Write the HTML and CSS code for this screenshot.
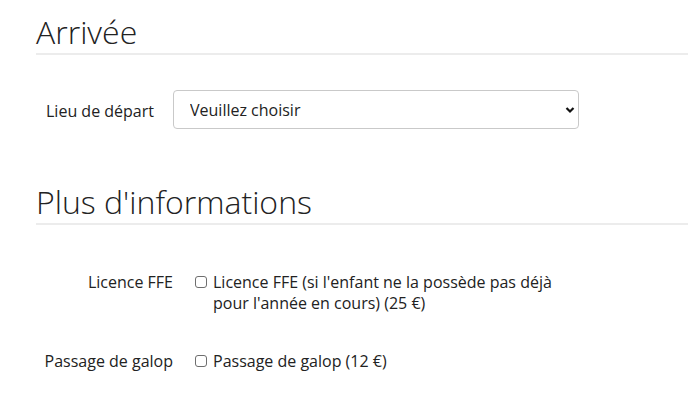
FILE: index.html
```html
<!DOCTYPE html>
<html>
  <head>
    <meta charset="utf-8" />
    <title>Inscription</title>
    <link rel="stylesheet" href="styles.css">
  </head>
  <body>
    <main class="page">
      <!-- Arrivée -->
      <section class="block">
        <h2 class="block-title">Arrivée</h2>
        <div class="field field-select">
          <label for="lieu" class="field-label">Lieu de départ</label>
          <span class="select-wrap">
            <select id="lieu" class="select">
              <option>Veuillez choisir</option>
            </select>
            <svg class="select-arrow" width="10" height="8" viewBox="0 0 10 8">
              <path d="M1.5 2 L5 5.5 L8.5 2" fill="none" stroke="#111" stroke-width="2.2" />
            </svg>
          </span>
        </div>
      </section>

      <!-- Plus d'informations -->
      <section class="block">
        <h2 class="block-title">Plus d'informations</h2>
        <div class="field field-check">
          <span class="field-label">Licence FFE</span>
          <label class="check">
            <input type="checkbox" class="check-box" />
            <span>Licence FFE (si l'enfant ne la possède pas déjà pour l'année en cours) (25 €)</span>
          </label>
        </div>
        <div class="field field-check">
          <span class="field-label">Passage de galop</span>
          <label class="check">
            <input type="checkbox" class="check-box" />
            <span>Passage de galop (12 €)</span>
          </label>
        </div>
      </section>
    </main>
  </body>
</html>
```

FILE: styles.css
```css
body {
  margin: 0;
  font-family: "Open Sans", "Liberation Sans", sans-serif;
  font-size: 16px;
  line-height: 21px;
  color: #222;
  background: #fff;
}
.page {
  padding: 13px 0 0 36px;
}
.block {
  margin-bottom: 54px;
}
.block-title {
  margin: 0 0 35px;
  padding-bottom: 2px;
  font-size: 32px;
  font-weight: 300;
  line-height: 38px;
  border-bottom: 2px solid #ececec;
}

/* ligne avec liste déroulante */
.field-select {
  display: flex;
  align-items: flex-start;
}
.field-select .field-label {
  box-sizing: border-box;
  width: 137px;
  padding: 11px 0 0 10px;
}
.select-wrap {
  position: relative;
  display: inline-block;
}
.select {
  appearance: none;
  box-sizing: border-box;
  width: 406px;
  height: 39px;
  padding: 0 30px 0 16px;
  border: 1px solid #c9c9c9;
  border-radius: 4px;
  background: #fff;
  font-family: inherit;
  font-size: 16px;
  color: #222;
}
.select-arrow {
  position: absolute; /* flèche par-dessus le select */
  right: 4px;
  top: 16px;
  pointer-events: none;
}

/* lignes avec cases à cocher */
.field-check {
  display: grid;
  grid-template-columns: 137px 385px;
  column-gap: 22px;
  padding-top: 12px;
  margin-bottom: 25px;
}
.field-check .field-label {
  text-align: right;
}
.check {
  display: flex;
  align-items: flex-start;
}
.check-box {
  appearance: none;
  flex: 0 0 auto;
  width: 12px;
  height: 12px;
  margin: 4px 6px 0 0;
  border: 1px solid #6e6e6e;
  border-radius: 3px;
  background: #fff;
}
```
